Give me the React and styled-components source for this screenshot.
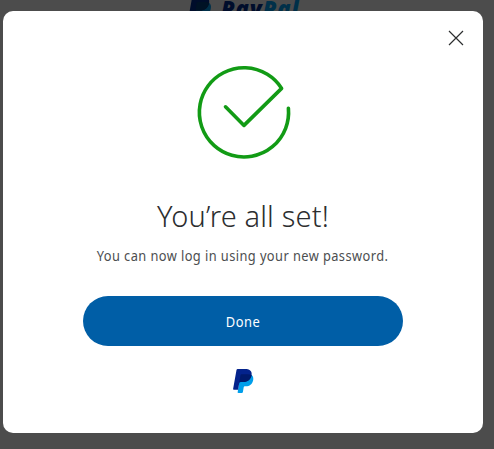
import React from "react";
import styled, { createGlobalStyle } from "styled-components";

const GlobalStyle = createGlobalStyle`
  * { box-sizing: border-box; }
  body { margin: 0; background: #4c4c4c; overflow: hidden; }
`;

const Page = styled.div`
  position: relative;
  height: 449px;
  overflow: hidden;
  background: #4c4c4c;
  font-family: "Noto Sans", "Open Sans", sans-serif;
`;

const Brand = styled.header`
  display: flex;
  gap: 9px;
  height: 28px;
  margin-top: -4px;
  padding-left: 188px;
`;

const Wordmark = styled.span`
  margin-top: -1px;
  font: italic 800 22px/26px "Open Sans", sans-serif;
  letter-spacing: 0.9px;
  color: #000d2b;
`;

const WordmarkAccent = styled.span`
  color: #003049;
`;

const Dialog = styled.section`
  position: absolute;
  top: 11px;
  left: 3px;
  display: flex;
  flex-direction: column;
  align-items: center;
  width: 480px;
  height: 422px;
  border-radius: 10px;
  background: #fff;
`;

const CloseButton = styled.button`
  display: flex;
  align-self: flex-end;
  margin: 19px 19px 0 0;
  padding: 0;
  border: 0;
  background: none;
`;

const SuccessMark = styled.svg`
  display: block;
  margin: 19px 0 0 2px;
  flex: none;
`;

const Title = styled.h1`
  margin: 33px 0 0;
  font-size: 29px;
  font-weight: 300;
  letter-spacing: 0.15px;
  line-height: 44px;
  color: #2c2e2f;
  white-space: nowrap;
`;

const Message = styled.p`
  margin: 5px 0 0;
  font-size: 15px;
  font-weight: 400;
  letter-spacing: 0.5px;
  line-height: 24px;
  color: #4c4e50;
  white-space: nowrap;
  transform: scaleX(0.855);
`;

const DoneButton = styled.button`
  width: 320px;
  height: 50px;
  margin-top: 29px;
  padding: 0;
  border: 0;
  border-radius: 25px;
  background: #005ea6;
  color: #fff;
  font: 400 15px/24px "Noto Sans", "Open Sans", sans-serif;
`;

const ButtonLabel = styled.span`
  display: inline-block;
  letter-spacing: 0.6px;
  transform: scaleX(0.86);
`;

const Footer = styled.footer`
  display: flex;
  margin-top: 23px;
`;

function Monogram({ width, height, dark, overlap, light }) {
  return (
    <svg width={width} height={height} viewBox="0 0 21 25" aria-hidden="true">
      <path fill={light} d="M18.6 6C20.3 7.3 20.6 9.3 20.1 11.5C19.2 15.4 16.6 17.3 12.8 17.3H11.8C11.2 17.3 10.8 17.7 10.7 18.3L9.9 23.1C9.8 23.7 9.4 24 8.8 24H5.4C4.9 24 4.6 23.6 4.7 23.1L7 8Z" />
      <path fill={dark} d="M3.5 1.1C3.6 .5 4 .1 4.7 .1H12C16.3 .1 19.3 2 18.6 6C17.8 10.8 14.6 13 10.1 13H7.7C6.9 13 6.4 13.4 6.2 14.2L5.1 20.7H.8C.3 20.7 0 20.4 .1 19.9Z" />
      <path fill={overlap} d="M18.6 6C17.8 10.8 14.6 13 10.1 13H7.7C6.9 13 6.4 13.4 6.2 14.2L7.4 6.5C7.5 5.8 8 5.3 8.8 5.3H14.5C16.2 5.3 17.6 5.5 18.6 6Z" />
    </svg>
  );
}

export default function App() {
  return (
    <>
      <GlobalStyle />
      <Page>
        <Brand>
          <Monogram width={24} height={28} dark="#000d2b" overlap="#001225" light="#003049" />
          <Wordmark>Pay<WordmarkAccent>Pal</WordmarkAccent></Wordmark>
        </Brand>
        <Dialog role="dialog" aria-labelledby="dialog-title">
          <CloseButton aria-label="Close">
            <svg width="16" height="16" viewBox="0 0 16 16" stroke="#2c2e2f" strokeWidth="1.2">
              <path d="M1 1L15 15M15 1L1 15" />
            </svg>
          </CloseButton>
          <SuccessMark width="96" height="96" viewBox="0 0 96 96" fill="none" stroke="#129b15" strokeWidth="3.6" strokeLinecap="round" strokeLinejoin="round">
            <path d="M29.5 41.8L48 60.4L85.6 23.4A44.6 44.6 0 1 0 92.4 43.4" />
          </SuccessMark>
          <Title id="dialog-title">You’re all set!</Title>
          <Message>You can now log in using your new password.</Message>
          <DoneButton><ButtonLabel>Done</ButtonLabel></DoneButton>
          <Footer>
            <Monogram width={21} height={25} dark="#04238c" overlap="#001a6c" light="#009eea" />
          </Footer>
        </Dialog>
      </Page>
    </>
  );
}
